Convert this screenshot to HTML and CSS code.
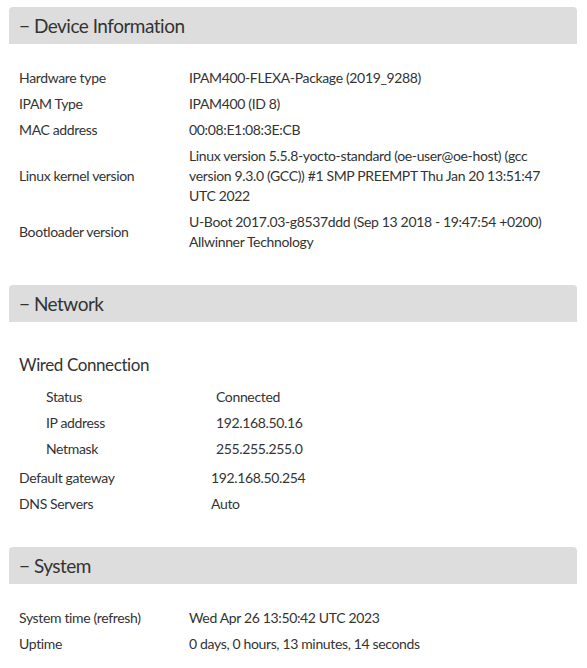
FILE: index.html
```html
<!DOCTYPE html>
<html>
<head>
<meta charset="utf-8">
<link rel="stylesheet" href="styles.css">
</head>
<body>
<div class="page">
  <section class="section">
    <div class="section-head">− Device Information</div>
    <div class="info info-device">
      <div class="label">Hardware type</div><div class="value">IPAM400-FLEXA-Package (2019_9288)</div>
      <div class="label">IPAM Type</div><div class="value">IPAM400 (ID 8)</div>
      <div class="label">MAC address</div><div class="value">00:08:E1:08:3E:CB</div>
      <div class="label">Linux kernel version</div><div class="value">Linux version 5.5.8-yocto-standard (oe-user@oe-host) (gcc version 9.3.0 (GCC)) #1 SMP PREEMPT Thu Jan 20 13:51:47 UTC 2022</div>
      <div class="label">Bootloader version</div><div class="value">U-Boot 2017.03-g8537ddd (Sep 13 2018 - 19:47:54 +0200) Allwinner Technology</div>
    </div>
  </section>
  <section class="section">
    <div class="section-head">− Network</div>
    <h3 class="subhead">Wired Connection</h3>
    <div class="info info-nested">
      <div class="label">Status</div><div class="value">Connected</div>
      <div class="label">IP address</div><div class="value">192.168.50.16</div>
      <div class="label">Netmask</div><div class="value">255.255.255.0</div>
    </div>
    <div class="info info-net">
      <div class="label">Default gateway</div><div class="value">192.168.50.254</div>
      <div class="label">DNS Servers</div><div class="value">Auto</div>
    </div>
  </section>
  <section class="section">
    <div class="section-head">− System</div>
    <div class="info info-device">
      <div class="label">System time (refresh)</div><div class="value">Wed Apr 26 13:50:42 UTC 2023</div>
      <div class="label">Uptime</div><div class="value">0 days, 0 hours, 13 minutes, 14 seconds</div>
    </div>
  </section>
</div>
</body>
</html>
```
FILE: styles.css
```css
html, body {
  margin: 0;
  padding: 0;
  background: #ffffff;
}
body {
  font-family: Lato, "Liberation Sans", sans-serif;
  font-size: 14px;
  color: #333333;
  letter-spacing: -0.35px;
}
.page {
  padding: 7px 10px 0 9px;
  display: flex;
  flex-direction: column;
  gap: 30px;
}
.section-head {
  background: #dddddd;
  border-radius: 4px 4px 0 0;
  height: 37px;
  line-height: 37px;
  padding-left: 10px;
  font-size: 19px;
  letter-spacing: -0.5px;
  color: #333333;
}
.info {
  display: grid;
  grid-template-columns: 170px 1fr;
  margin-left: 10px;
  line-height: 20px;
}
.info-device {
  margin-top: 21px;
  grid-template-columns: 170px 370px;
}
.info .label, .info .value {
  padding: 3px 0;
  align-self: center;
}
.subhead {
  margin: 32px 0 8px 10px;
  font-weight: normal;
  font-size: 17px;
  letter-spacing: -0.4px;
  line-height: 22px;
}
.info-nested {
  margin-left: 37px;
  margin-bottom: 3px;
}
.info-net {
  grid-template-columns: 192px 1fr;
}
```
